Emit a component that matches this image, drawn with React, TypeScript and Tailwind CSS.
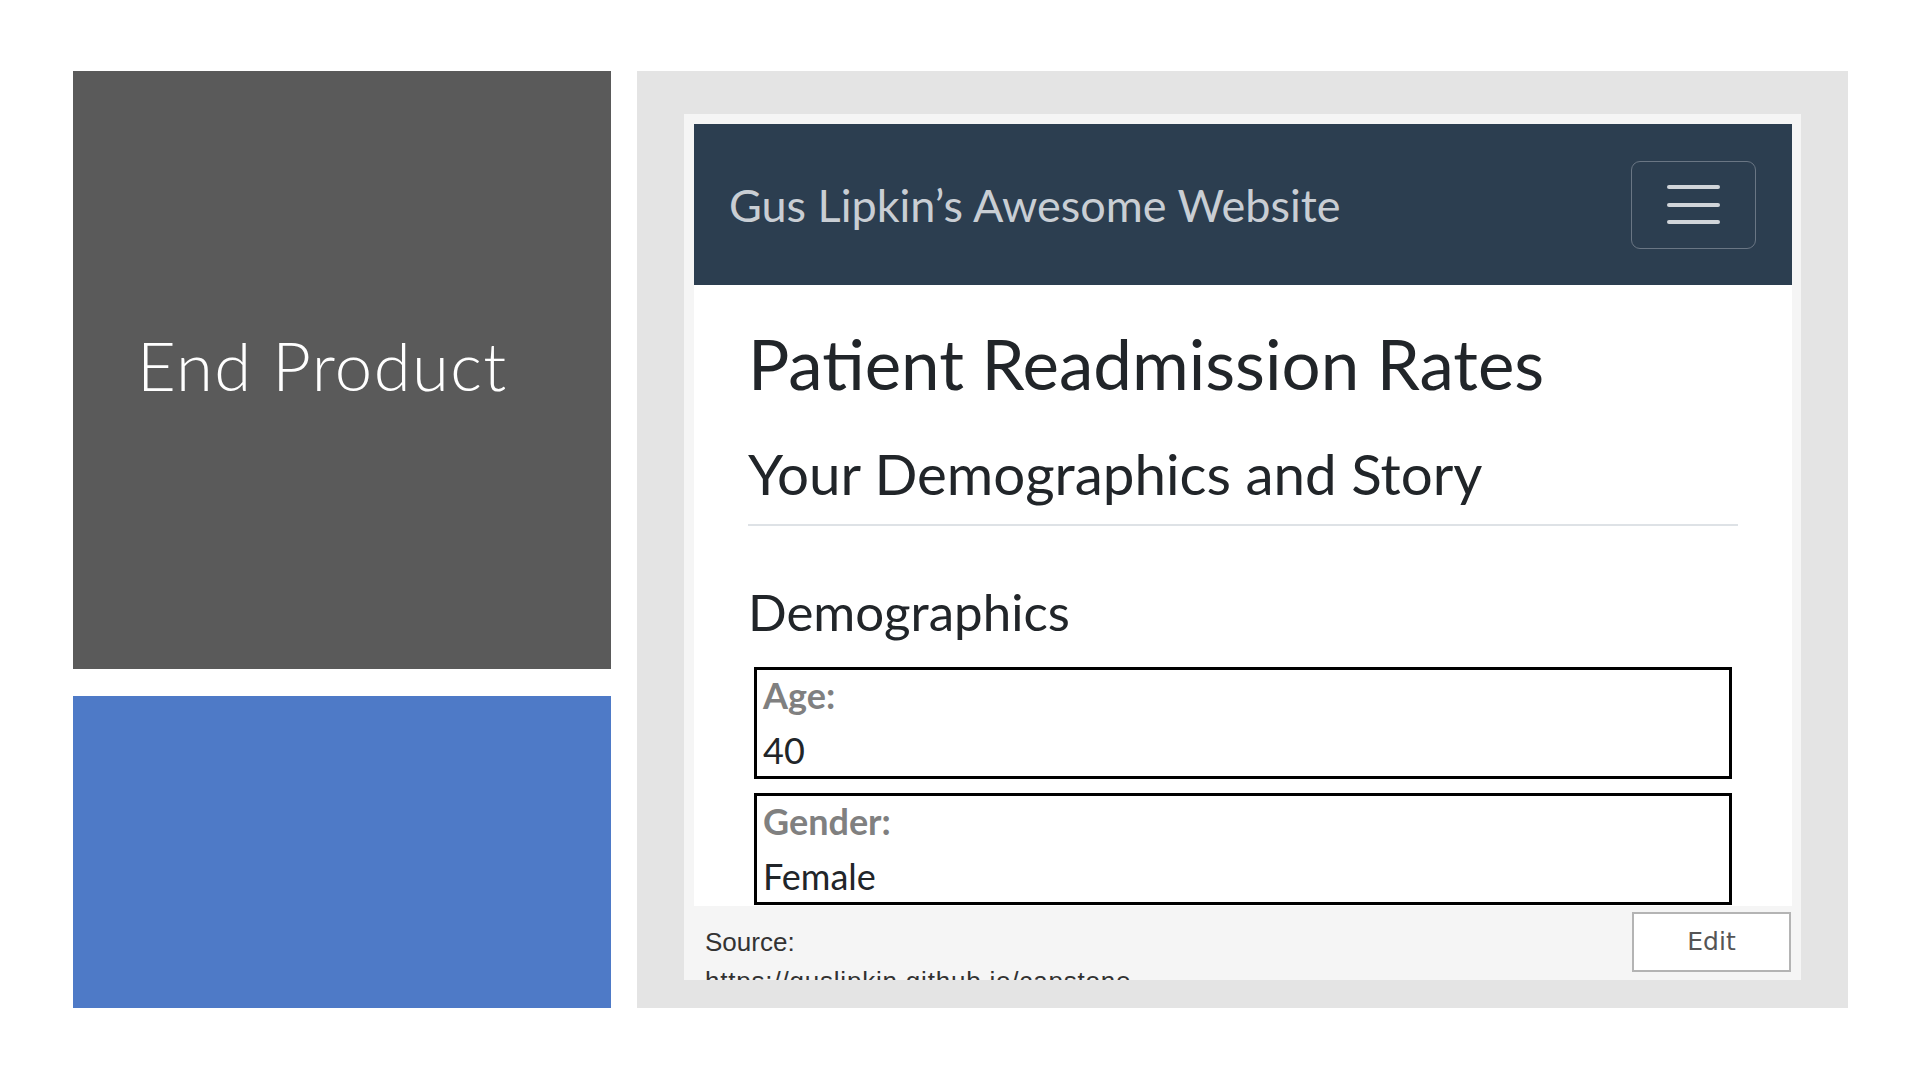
import React from 'react';

const lato = { fontFamily: 'Lato, "Noto Sans", sans-serif' };

const Field = ({ label, value, className }: { label: string; value: string; className?: string }) => (
    <div className={`ml-[6px] w-[978px] border-[3px] border-black bg-white px-[6px] pt-[4px] pb-[4px] ${className || ''}`}>
        <div className="text-[36px] font-bold leading-[43px] text-[#808080]">{label}</div>
        <div className="mt-[12px] text-[36px] leading-[43px] text-[#212529]">{value}</div>
    </div>
);

const Hamburger = () => (
    <button className="flex h-[88px] w-[125px] flex-col items-center justify-center gap-[13.5px] rounded-[9px] border-[1.5px] border-[#6a7684]">
        <span className="block h-[4px] w-[53px] rounded-full bg-[#d1d5da]" />
        <span className="block h-[4px] w-[53px] rounded-full bg-[#d1d5da]" />
        <span className="block h-[4px] w-[53px] rounded-full bg-[#d1d5da]" />
    </button>
);

const WebsitePreview = () => (
    <div className="flex h-[866px] w-[1117px] flex-col overflow-hidden bg-[#f5f5f5]">
        <div className="pt-[10px] pl-[10px] pr-[9px]">
            <div className="h-[782px] overflow-hidden bg-white" style={lato}>
                <nav className="flex h-[161px] items-center justify-between bg-[#2c3e50] pl-[35px] pr-[36px]">
                    <span className="text-[45px] leading-[50px] text-[#c9ced4]">Gus Lipkin’s Awesome Website</span>
                    <Hamburger />
                </nav>
                <div className="px-[54px] pt-[37px] text-[#212529]">
                    <h1 className="text-[69px] leading-[84px]">Patient Readmission Rates</h1>
                    <h2 className="mt-[32px] text-[56.5px] leading-[70px]">Your Demographics and Story</h2>
                    <hr className="mt-[16px] border-t-2 border-[#dee2e6]" />
                    <h3 className="mt-[55px] text-[51px] leading-[61px]">Demographics</h3>
                    <Field label="Age:" value="40" className="mt-[25px]" />
                    <Field label="Gender:" value="Female" className="mt-[14px]" />
                </div>
            </div>
        </div>
        <div className="flex flex-1 items-start justify-between pl-[21px] pr-[10px]">
            <div className="pt-[17px] text-[26px] leading-[39px] text-[#333333]" style={{ fontFamily: '"Liberation Sans", Arial, sans-serif' }}>
                <div>Source:</div>
                <div className="tracking-[0.8px]">https://guslipkin.github.io/capstone</div>
            </div>
            <button
                className="mt-[6px] h-[60px] w-[159px] border-2 border-[#b4b4b4] bg-white text-[25px] text-[#555555]"
                style={{ fontFamily: '"DejaVu Sans", sans-serif' }}
            >
                Edit
            </button>
        </div>
    </div>
);

export default function App() {
    return (
        <div className="h-[1080px] w-[1920px] overflow-hidden bg-white">
            <div className="flex gap-[26px] pl-[73px] pt-[71px]">
                <div className="flex w-[538px] flex-col gap-[27px]">
                    <div className="h-[598px] bg-[#5a5a5a] pl-[64px] pt-[255px]">
                        <h1 className="text-[67px] font-light leading-[79px] tracking-[1.4px] text-white" style={lato}>End Product</h1>
                    </div>
                    <div className="h-[312px] bg-[#4e7ac7]" />
                </div>
                <div className="flex h-[937px] w-[1211px] bg-[#e4e4e4] pl-[47px] pt-[43px]">
                    <WebsitePreview />
                </div>
            </div>
        </div>
    );
}
